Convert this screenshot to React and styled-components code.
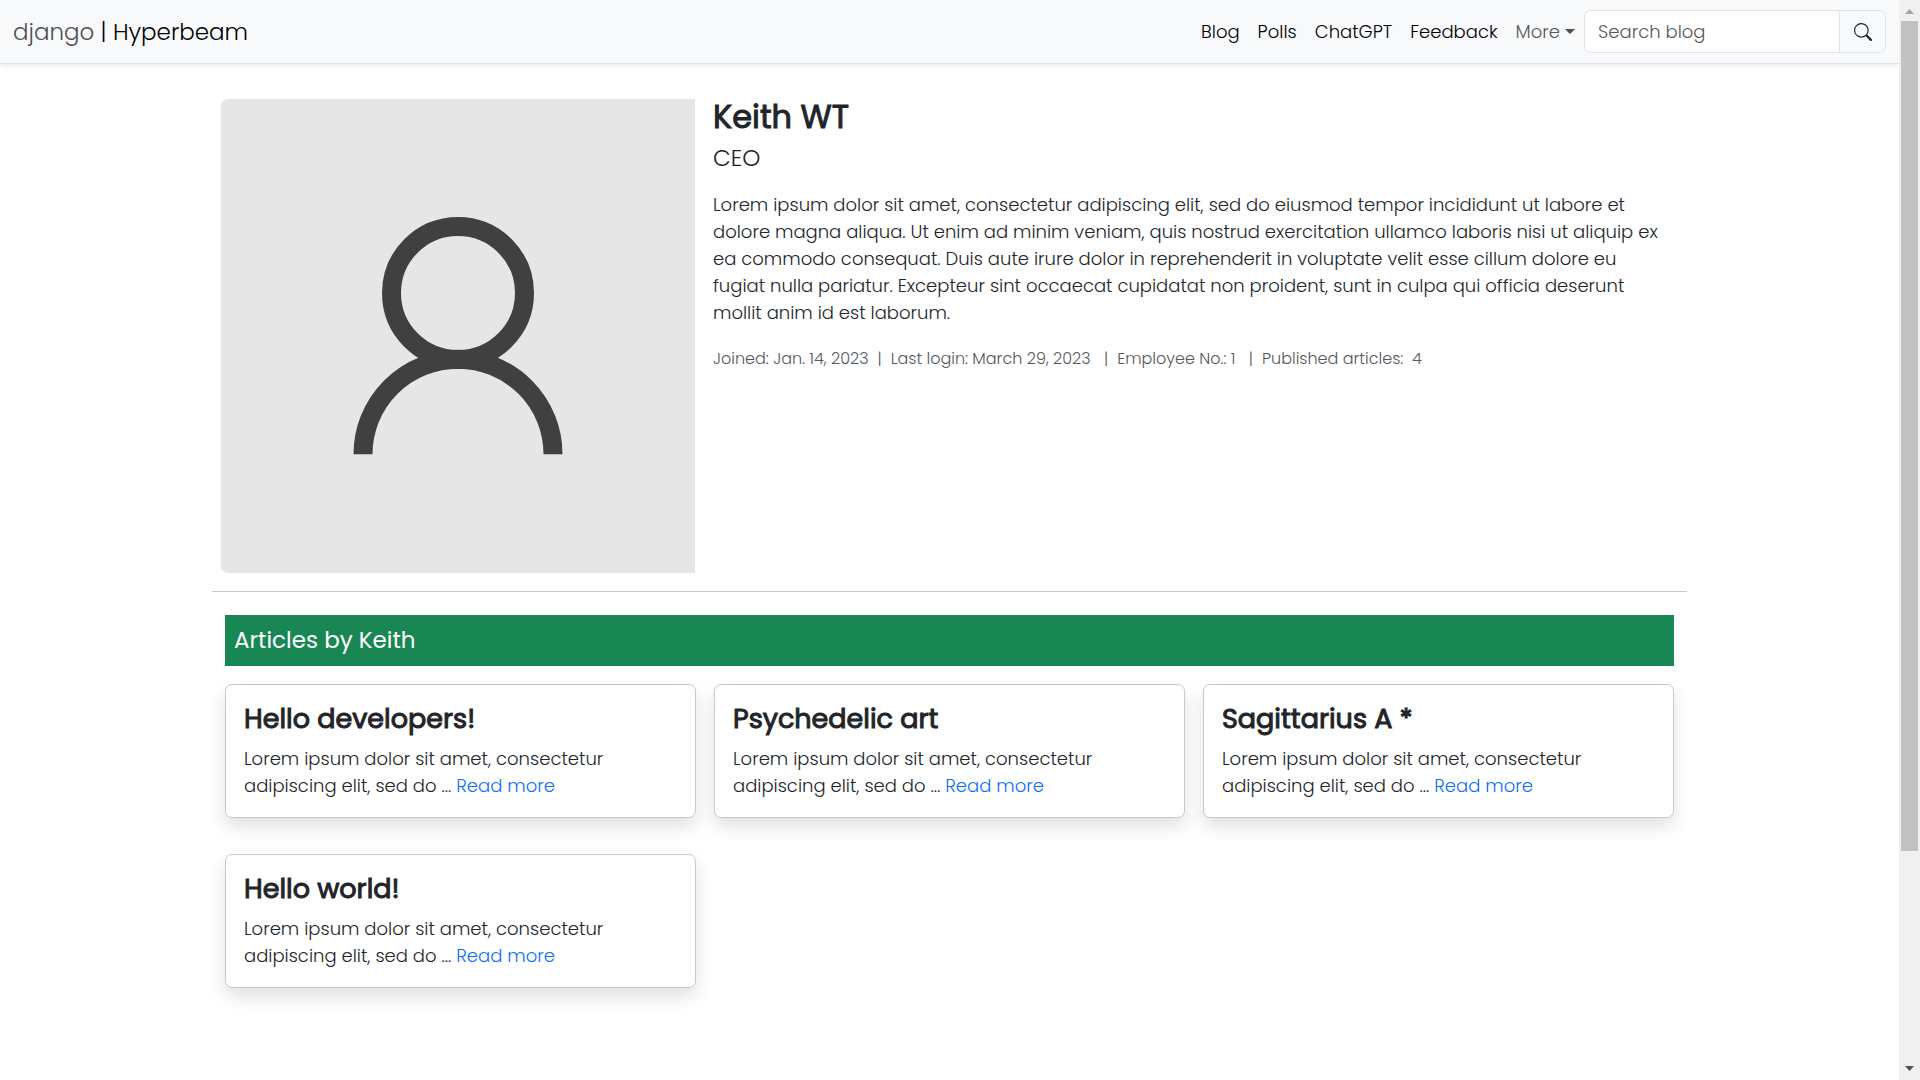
import React from "react";
import styled, { createGlobalStyle } from "styled-components";

const GlobalStyle = createGlobalStyle`
  *, *::before, *::after { box-sizing: border-box; }
  body {
    margin: 0;
    background: #fff;
    color: #212529;
    font-family: Poppins, Inter, "Open Sans", sans-serif;
    font-size: 18px;
    font-weight: 300;
    line-height: 27px;
  }
  h1, h2, h3, p { margin: 0; }
  a { color: inherit; text-decoration: none; }
  button, input { font: inherit; color: inherit; }
`;

const Shell = styled.div`
  display: grid;
  grid-template-columns: minmax(0, 1fr) 21px;
  min-height: 100vh;
`;

const Page = styled.div`
  min-width: 0;
`;

const Navbar = styled.header`
  display: flex;
  align-items: center;
  justify-content: space-between;
  padding: 10px 13px;
  background: #f8f9fb;
  border-bottom: 1px solid #dee2e6;
  box-shadow: 0 2px 5px rgba(0, 0, 0, 0.075);
`;

const Brand = styled.a`
  font-size: 23px;
  line-height: 34px;
  color: #000;
`;

const BrandMuted = styled.span`
  color: #4f5051;
`;

const Nav = styled.nav`
  display: flex;
  align-items: center;
`;

const NavLink = styled.a`
  padding: 8px 9px;
  color: #000;
`;

const MoreButton = styled.button`
  display: flex;
  align-items: center;
  gap: 5px;
  padding: 8px 9px;
  border: 0;
  background: none;
  color: #57585a;

  &::after {
    content: "";
    border-top: 5px solid #4d4d4d;
    border-left: 5px solid transparent;
    border-right: 5px solid transparent;
  }
`;

const SearchForm = styled.form`
  display: flex;
  height: 43px;
  border: 1px solid #dee2e6;
  border-radius: 7px;
  overflow: hidden;
`;

const SearchInput = styled.input`
  width: 254px;
  padding: 0 13px;
  border: 0;
  background: #fff;
  &::placeholder { color: #53575b; opacity: 1; }
`;

const SearchButton = styled.button`
  display: grid;
  place-items: center;
  width: 46px;
  padding: 0;
  border: 0;
  border-left: 1px solid #dee2e6;
  background: #f8f9fb;
`;

const Main = styled.main`
  max-width: 1475px;
  margin: 0 auto;
  padding-top: 35px;
`;

const Profile = styled.section`
  display: grid;
  grid-template-columns: minmax(0, 474px) minmax(0, 1fr);
  gap: 18px;
  padding: 0 9px 18px;
  border-bottom: 1px solid #c8c9ca;
`;

const Avatar = styled.svg`
  display: block;
  width: 100%;
  background: #e6e6e6;
  border-radius: 7px 0 0 7px;
`;

const Details = styled.div`
  padding-right: 9px;
`;

const Name = styled.h1`
  font-size: 32px;
  line-height: 36px;
  font-weight: 400;
  -webkit-text-stroke: 1px currentColor;
`;

const Role = styled.p`
  margin-top: 9px;
  font-size: 23px;
  line-height: 29px;
`;

const Bio = styled.p`
  margin-top: 18px;
`;

const Meta = styled.p`
  display: flex;
  gap: 9px;
  margin-top: 18px;
  font-size: 16px;
  line-height: 29px;
  color: #54585c;
  white-space: pre;
`;

const Articles = styled.section`
  padding: 23px 13px 36px;
`;

const Banner = styled.h2`
  padding: 12px 9px;
  background: #198754;
  color: #fff;
  font-size: 23px;
  line-height: 27px;
  font-weight: 400;
`;

const CardGrid = styled.div`
  display: grid;
  grid-template-columns: repeat(3, minmax(0, 1fr));
  gap: 36px 18px;
  margin-top: 18px;
`;

const Card = styled.article`
  padding: 17px 18px 18px;
  background: #fff;
  border: 1px solid #c8c9ca;
  border-radius: 7px;
  box-shadow: 0 9px 18px rgba(0, 0, 0, 0.12);
`;

const CardTitle = styled.h3`
  font-size: 27px;
  line-height: 34px;
  font-weight: 400;
  -webkit-text-stroke: 1px currentColor;
`;

const CardText = styled.p`
  max-width: 380px;
  margin-top: 9px;
`;

const ReadMore = styled.a`
  color: #0d6efd;
`;

const Rail = styled.div`
  position: sticky;
  top: 0;
  display: flex;
  flex-direction: column;
  align-items: center;
  height: 100vh;
  background: #f0f0f0;
`;

const Arrow = styled.svg`
  display: block;
  width: 21px;
  height: 21px;
  flex: none;
`;

const Track = styled.div`
  flex: 1;
  width: 17px;
`;

const Thumb = styled.div`
  height: 80%;
  background: #c1c1c1;
`;

const articles = ["Hello developers!", "Psychedelic art", "Sagittarius A *", "Hello world!"];

export default function App() {
  return (
    <>
      <GlobalStyle />
      <Shell>
        <Page>
          <Navbar>
            <Brand href="#"><BrandMuted>django</BrandMuted> | Hyperbeam</Brand>
            <Nav>
              <NavLink href="#">Blog</NavLink>
              <NavLink href="#">Polls</NavLink>
              <NavLink href="#">ChatGPT</NavLink>
              <NavLink href="#">Feedback</NavLink>
              <MoreButton type="button">More</MoreButton>
              <SearchForm>
                <SearchInput type="search" aria-label="Search blog" placeholder="Search blog" />
                <SearchButton type="button" aria-label="Search">
                  <svg width="18" height="18" viewBox="0 0 16 16" fill="#212529">
                    <path d="M11.742 10.344a6.5 6.5 0 1 0-1.397 1.398h-.001c.03.04.062.078.098.115l3.85 3.85a1 1 0 0 0 1.415-1.414l-3.85-3.85a1.007 1.007 0 0 0-.115-.1zM12 6.5a5.5 5.5 0 1 1-11 0 5.5 5.5 0 0 1 11 0z" />
                  </svg>
                </SearchButton>
              </SearchForm>
            </Nav>
          </Navbar>
          <Main>
            <Profile>
              <Avatar viewBox="0 0 474 474" role="img" aria-label="Keith WT" fill="none" stroke="#404040" strokeWidth="19">
                <circle cx="237" cy="194" r="66.5" />
                <path d="M142 355.3a95 95 0 0 1 190 0" />
              </Avatar>
              <Details>
                <Name>Keith WT</Name>
                <Role>CEO</Role>
                <Bio>
                  Lorem ipsum dolor sit amet, consectetur adipiscing elit, sed do eiusmod tempor incididunt ut labore et
                  dolore magna aliqua. Ut enim ad minim veniam, quis nostrud exercitation ullamco laboris nisi ut aliquip ex
                  ea commodo consequat. Duis aute irure dolor in reprehenderit in voluptate velit esse cillum dolore eu
                  fugiat nulla pariatur. Excepteur sint occaecat cupidatat non proident, sunt in culpa qui officia deserunt
                  mollit anim id est laborum.
                </Bio>
                <Meta>
                  <span>Joined: Jan. 14, 2023</span>
                  <span>|</span>
                  <span>Last login: March 29, 2023 </span>
                  <span>|</span>
                  <span>Employee No.: 1 </span>
                  <span>|</span>
                  <span>Published articles:  4</span>
                </Meta>
              </Details>
            </Profile>
            <Articles>
              <Banner>Articles by Keith</Banner>
              <CardGrid>
                {articles.map((title) => (
                  <Card key={title}>
                    <CardTitle>{title}</CardTitle>
                    <CardText>
                      Lorem ipsum dolor sit amet, consectetur adipiscing elit, sed do ... <ReadMore href="#">Read more</ReadMore>
                    </CardText>
                  </Card>
                ))}
              </CardGrid>
            </Articles>
          </Main>
        </Page>
        <Rail aria-hidden="true">
          <Arrow viewBox="0 0 21 21" fill="#a3a3a3"><path d="M6 14h9l-4.500-5z" /></Arrow>
          <Track><Thumb /></Track>
          <Arrow viewBox="0 0 21 21" fill="#505050"><path d="M6 7h9l-4.500 5z" /></Arrow>
        </Rail>
      </Shell>
    </>
  );
}
